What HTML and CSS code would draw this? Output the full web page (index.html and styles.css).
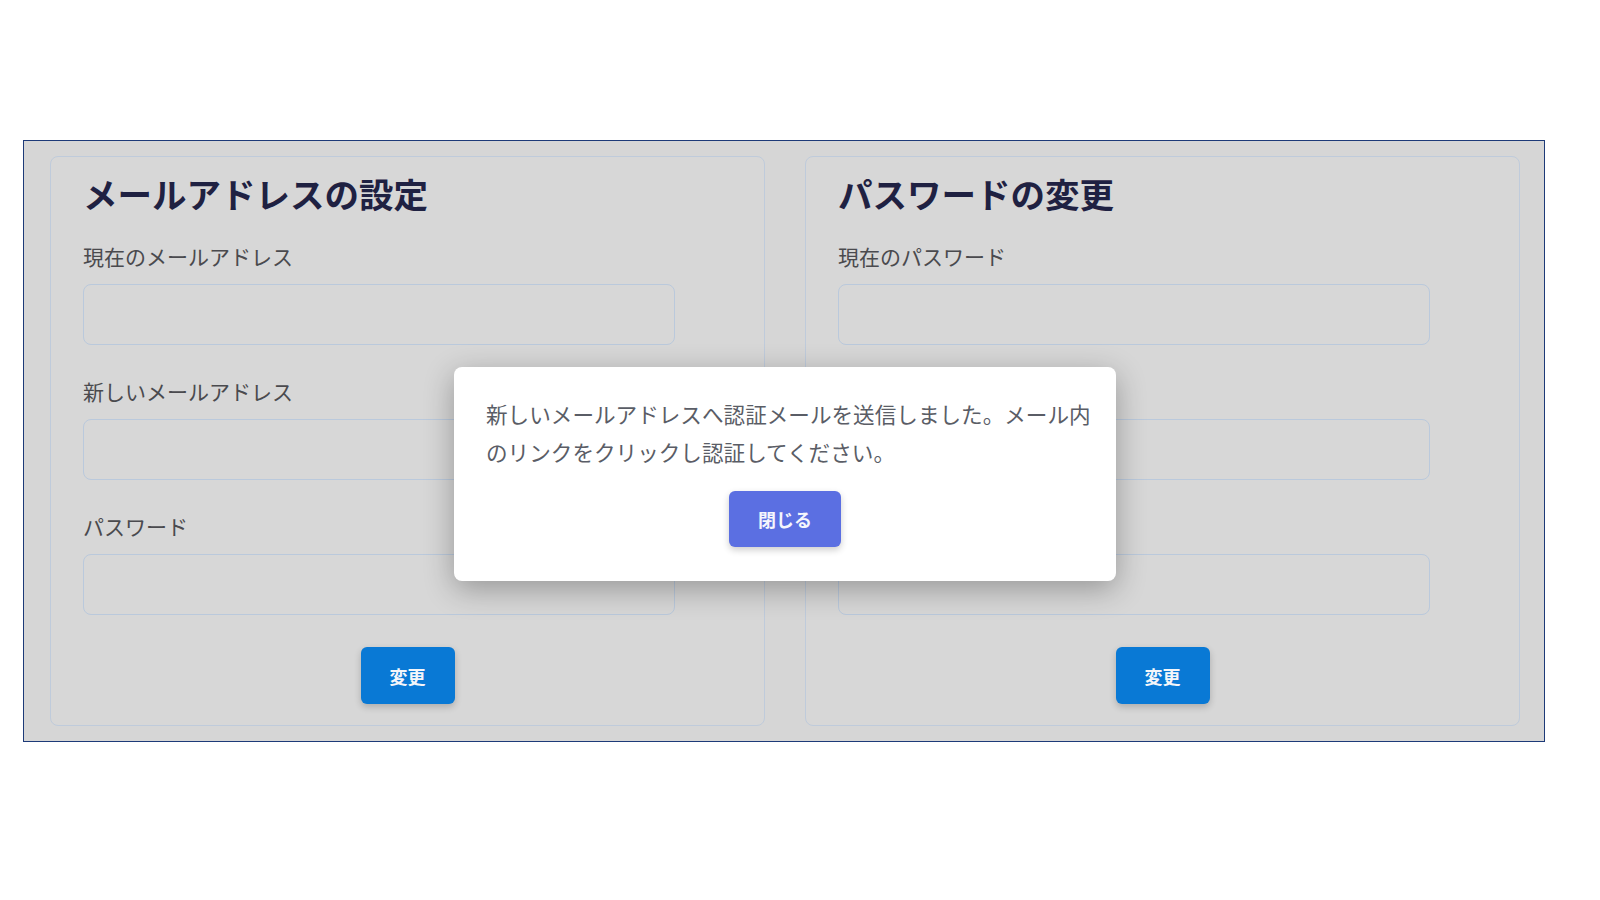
FILE: index.html
```html
<!DOCTYPE html>
<html lang="ja">
<head>
<meta charset="utf-8">
<title>設定</title>
<link rel="stylesheet" href="styles.css">
</head>
<body>
<div class="frame">
  <div class="cards">
    <section class="card">
      <h2 class="card-title">メールアドレスの設定</h2>
      <div class="field">
        <label class="label">現在のメールアドレス</label>
        <div class="input"></div>
      </div>
      <div class="field">
        <label class="label">新しいメールアドレス</label>
        <div class="input"></div>
      </div>
      <div class="field">
        <label class="label">パスワード</label>
        <div class="input"></div>
      </div>
      <div class="actions"><button class="btn-primary">変更</button></div>
    </section>
    <section class="card">
      <h2 class="card-title">パスワードの変更</h2>
      <div class="field">
        <label class="label">現在のパスワード</label>
        <div class="input"></div>
      </div>
      <div class="field">
        <label class="label label-covered">新しいパスワード</label>
        <div class="input"></div>
      </div>
      <div class="field">
        <label class="label label-covered">新しいパスワード（確認）</label>
        <div class="input"></div>
      </div>
      <div class="actions"><button class="btn-primary">変更</button></div>
    </section>
  </div>
  <div class="modal">
    <p class="modal-text">新しいメールアドレスへ認証メールを送信しました。メール内のリンクをクリックし認証してください。</p>
    <div class="modal-actions"><button class="btn-close">閉じる</button></div>
  </div>
</div>
</body>
</html>
```
FILE: styles.css
```css
* { box-sizing: border-box; }
html, body { margin: 0; padding: 0; background: #ffffff; }
body {
  font-family: "Noto Sans CJK JP", "Noto Sans", sans-serif;
  width: 1600px;
  height: 900px;
  overflow: hidden;
}
.frame {
  position: relative;
  margin: 140px 0 0 23px;
  width: 1522px;
  height: 602px;
  border: 1px solid #1d3a78;
  background: #d6d6d6;
  padding: 15px 24px 15px 26px;
}
.cards {
  display: flex;
  gap: 40px;
  height: 100%;
}
.card {
  width: 715px;
  border: 1.5px solid #bfcbdb;
  border-radius: 8px;
  padding: 14px 32px 22px 32px;
  background: #d7d7d7;
  display: flex;
  flex-direction: column;
}
.card-title {
  margin: 0 0 26px 0;
  font-size: 34.5px;
  line-height: 44px;
  font-weight: 700;
  color: #1f2142;
}
.field { margin-bottom: 31px; }
.field:nth-of-type(3) { margin-bottom: 32px; }
.label {
  display: block;
  font-size: 21px;
  line-height: 30px;
  color: #4a4a4e;
  margin-bottom: 13px;
}
.label-covered { visibility: hidden; }
.input {
  width: 592px;
  height: 61px;
  border: 1.5px solid #bac9dc;
  border-radius: 8px;
  background: #d7d7d7;
}
.actions {
  display: flex;
  justify-content: center;
}
.btn-primary {
  width: 94px;
  height: 57px;
  border: none;
  border-radius: 6px;
  background: #0979d5;
  color: #f4f6fa;
  font-family: "Noto Sans CJK JP", sans-serif;
  font-size: 18px;
  font-weight: 700;
  box-shadow: 0 3px 7px rgba(0,0,0,0.2);
}
.modal {
  position: absolute;
  left: 430px;
  top: 226px;
  width: 662px;
  height: 214px;
  background: #ffffff;
  border-radius: 8px;
  padding: 28px 16px 0 32px;
  box-shadow: 0 8px 30px rgba(0,0,0,0.3);
}
.modal-text {
  margin: 0;
  font-size: 21.6px;
  line-height: 38px;
  color: #5a5d66;
}
.modal-actions {
  display: flex;
  justify-content: center;
  margin-top: 20px;
  padding-right: 16px;
}
.btn-close {
  width: 112px;
  height: 56px;
  border: none;
  border-radius: 6px;
  background: #5b6fe2;
  color: #f5f6fc;
  font-family: "Noto Sans CJK JP", sans-serif;
  font-size: 18px;
  font-weight: 700;
  box-shadow: 0 3px 7px rgba(0,0,0,0.2);
}
```
